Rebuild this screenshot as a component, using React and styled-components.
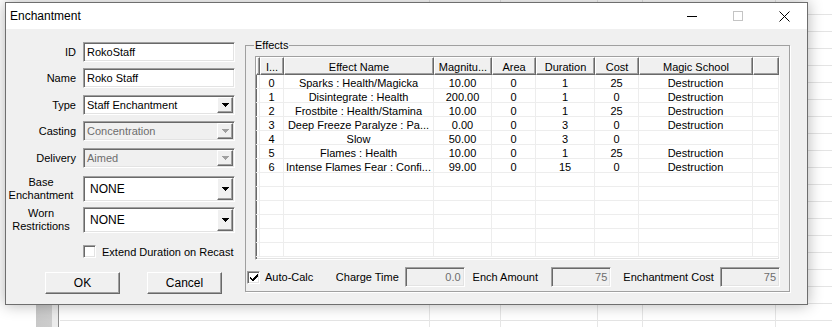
import React from "react";
import styled, { createGlobalStyle, css } from "styled-components";

const GlobalStyle = createGlobalStyle`
  html, body {
    margin: 0;
    padding: 0;
    background: #fff;
  }
  body {
    font-family: "Liberation Sans", Arial, sans-serif;
    font-size: 11px;
    color: #000;
  }
  * {
    box-sizing: border-box;
  }
`;

const sunken = css`
  border: 1px solid;
  border-color: #a0a0a0 #fff #fff #a0a0a0;
  box-shadow: inset 1px 1px 0 #696969, inset -1px -1px 0 #e3e3e3;
`;

const raised = css`
  border: 1px solid;
  border-color: #fff #696969 #696969 #fff;
  box-shadow: inset -1px -1px 0 #a0a0a0, inset 1px 1px 0 #f0f0f0;
`;

const Desktop = styled.div`
  width: 832px;
  height: 327px;
  overflow: hidden;
  padding: 2px 0 0 5px;
  background-color: #fff;
  background-image:
    linear-gradient(to right, transparent 429px, #e6e6e6 429px, #e6e6e6 430px, transparent 430px,
      transparent 500px, #e6e6e6 500px, #e6e6e6 501px, transparent 501px,
      transparent 597px, #e6e6e6 597px, #e6e6e6 598px, transparent 598px,
      transparent 642px, #e6e6e6 642px, #e6e6e6 643px, transparent 643px,
      transparent 775px, #e6e6e6 775px, #e6e6e6 776px, transparent 776px),
    repeating-linear-gradient(to bottom, transparent 0, transparent 14px, #e4e4e4 14px, #e4e4e4 15px, transparent 15px, transparent 17px),
    linear-gradient(to right, transparent 36px, #c8c8c8 36px, #cdcdcd 52px, #ececec 52px, #ececec 58px, #8c8c8c 58px, #8c8c8c 59px, transparent 59px);
  background-repeat: no-repeat;
  background-position: 0 0, 60px 0, 0 305px;
  background-size: 100% 100%, calc(100% - 60px) 100%, 100% 30px;
`;

const Window = styled.div`
  width: 803px;
  height: 303px;
  border: 1px solid #6e6e6e;
  background: #f0f0f0;
  box-shadow: 0 0 14px rgba(0, 0, 0, 0.3);
  display: flex;
  flex-direction: column;
`;

const TitleBar = styled.div`
  height: 26px;
  background: #fff;
  display: flex;
  align-items: center;
`;

const Title = styled.div`
  flex: 1;
  padding-left: 4px;
  font-size: 12px;
  color: #000;
`;

const CaptionButton = styled.div`
  width: 46px;
  height: 26px;
  display: flex;
  align-items: center;
  justify-content: center;
`;

const MinGlyph = styled.div`
  width: 10px;
  height: 1px;
  background: #000;
`;

const MaxGlyph = styled.div`
  width: 10px;
  height: 10px;
  border: 1px solid #c4c4c4;
`;

const Body = styled.div`
  flex: 1;
  display: flex;
`;

const Form = styled.div`
  width: 229px;
  padding-top: 13px;
  display: flex;
  flex-direction: column;
`;

const FieldRow = styled.div`
  display: grid;
  grid-template-columns: 70px 152px;
  column-gap: 7px;
  align-items: center;
  height: ${(p) => p.$h || 20}px;
  margin-top: ${(p) => p.$mt || 0}px;
`;

const Label = styled.div`
  text-align: ${(p) => (p.$center ? "center" : "right")};
  line-height: 13px;
  white-space: pre-line;
`;

const TextBox = styled.div`
  ${sunken};
  height: 100%;
  background: #fff;
  padding-left: 3px;
  display: flex;
  align-items: center;
  white-space: nowrap;
`;

const Combo = styled.div`
  ${sunken};
  height: 100%;
  background: ${(p) => (p.$disabled ? "#f0f0f0" : "#fff")};
  color: ${(p) => (p.$disabled ? "#6d6d6d" : "#000")};
  display: flex;
  align-items: center;
`;

const ComboText = styled.div`
  flex: 1;
  padding-left: ${(p) => p.$pad || 3}px;
  font-size: ${(p) => p.$size || 11}px;
  white-space: nowrap;
`;

const DropButton = styled.div`
  ${raised};
  width: 16px;
  align-self: stretch;
  margin: 1px;
  background: #f0f0f0;
  display: flex;
  align-items: center;
  justify-content: center;
`;

const CheckRow = styled.div`
  display: flex;
  align-items: center;
  margin: 17px 0 0 77px;
  height: 13px;
`;

const CheckBox = styled.div`
  ${sunken};
  width: ${(p) => p.$size || 13}px;
  height: ${(p) => p.$size || 13}px;
  background: #fff;
  flex-shrink: 0;
  display: flex;
  align-items: center;
  justify-content: center;
`;

const CheckText = styled.span`
  margin-left: ${(p) => p.$gap || 6}px;
  white-space: nowrap;
`;

const ButtonRow = styled.div`
  display: flex;
  gap: 27px;
  margin: 14px 0 0 39px;
`;

const Button = styled.div`
  ${raised};
  width: 75px;
  height: 22px;
  background: #f0f0f0;
  display: flex;
  align-items: center;
  justify-content: center;
  font-size: 12px;
`;

const GroupBox = styled.fieldset`
  margin: 10px 0 0 10px;
  padding: 0 9px 4px 9px;
  width: 545px;
  height: 253px;
  border: 1px solid #a0a0a0;
  box-shadow: 1px 1px 0 #fff;
  min-width: 0;
`;

const Legend = styled.legend`
  margin-left: -1px;
  padding: 0 1px;
  line-height: 13px;
  font-size: 11px;
`;

const ListView = styled.div`
  ${sunken};
  margin-top: 4px;
  height: 204px;
  background: #fff;
  display: grid;
  grid-template-columns: 4px 24px 150px 58px 44px 59px 44px 114px 1fr;
  grid-template-rows: 18px;
  grid-auto-rows: 14px;
  overflow: hidden;
`;

const HeadCell = styled.div`
  ${raised};
  background: #f0f0f0;
  text-align: center;
  padding-top: 3px;
  line-height: 13px;
  white-space: nowrap;
  overflow: hidden;
`;

const Cell = styled.div`
  border-right: 1px solid #ededed;
  border-bottom: 1px solid #ededed;
  text-align: center;
  padding-top: 2px;
  line-height: 12px;
  white-space: nowrap;
`;

const StatsRow = styled.div`
  display: flex;
  align-items: center;
  height: 20px;
  margin: 7px 0 0 -8px;
`;

const AutoCalc = styled.div`
  width: 89px;
  display: flex;
  align-items: center;
`;

const StatLabel = styled.div`
  width: ${(p) => p.$w}px;
  padding-left: ${(p) => p.$pl || 0}px;
  white-space: nowrap;
`;

const StatField = styled.div`
  ${sunken};
  width: 60px;
  height: 20px;
  background: #f0f0f0;
  color: #6d6d6d;
  text-align: right;
  padding-right: 3px;
  line-height: 18px;
`;

const headers = ["", "I...", "Effect Name", "Magnitu...", "Area", "Duration", "Cost", "Magic School", ""];

const effects = [
  ["0", "Sparks : Health/Magicka", "10.00", "0", "1", "25", "Destruction"],
  ["1", "Disintegrate : Health", "200.00", "0", "1", "0", "Destruction"],
  ["2", "Frostbite : Health/Stamina", "10.00", "0", "1", "25", "Destruction"],
  ["3", "Deep Freeze Paralyze : Pa...", "0.00", "0", "3", "0", "Destruction"],
  ["4", "Slow", "50.00", "0", "3", "0", ""],
  ["5", "Flames : Health", "10.00", "0", "1", "25", "Destruction"],
  ["6", "Intense Flames Fear : Confi...", "99.00", "0", "15", "0", "Destruction"],
];

const Arrow = ({ disabled }) => (
  <svg width="7" height="4" viewBox="0 0 7 4" shapeRendering="crispEdges">
    <polygon points="0,0 7,0 3.5,4" fill={disabled ? "#a0a0a0" : "#000"} />
  </svg>
);

const Select = ({ value, disabled, pad, size }) => (
  <Combo $disabled={disabled}>
    <ComboText $pad={pad} $size={size}>{value}</ComboText>
    <DropButton>
      <Arrow disabled={disabled} />
    </DropButton>
  </Combo>
);

const CloseGlyph = () => (
  <svg width="11" height="11" viewBox="0 0 11 11">
    <path d="M0.5 0.5 L10.5 10.5 M10.5 0.5 L0.5 10.5" stroke="#000" strokeWidth="1" />
  </svg>
);

const Tick = () => (
  <svg width="8" height="7" viewBox="0 0 8 7" shapeRendering="crispEdges">
    <path d="M0 3 L0 5 L2 7 L3 7 L8 2 L8 0 L7 0 L2.5 4.5 L2 4.5 Z" fill="#000" />
  </svg>
);

const App = () => {
  const blankRows = Array.from({ length: 6 });
  return (
    <Desktop>
      <GlobalStyle />
      <Window>
        <TitleBar>
          <Title>Enchantment</Title>
          <CaptionButton>
            <MinGlyph />
          </CaptionButton>
          <CaptionButton>
            <MaxGlyph />
          </CaptionButton>
          <CaptionButton>
            <CloseGlyph />
          </CaptionButton>
        </TitleBar>
        <Body>
          <Form>
            <FieldRow>
              <Label>ID</Label>
              <TextBox>RokoStaff</TextBox>
            </FieldRow>
            <FieldRow $mt={6}>
              <Label>Name</Label>
              <TextBox>Roko Staff</TextBox>
            </FieldRow>
            <FieldRow $mt={7}>
              <Label>Type</Label>
              <Select value="Staff Enchantment" />
            </FieldRow>
            <FieldRow $mt={6}>
              <Label>Casting</Label>
              <Select value="Concentration" disabled />
            </FieldRow>
            <FieldRow $mt={7}>
              <Label>Delivery</Label>
              <Select value="Aimed" disabled />
            </FieldRow>
            <FieldRow $mt={8} $h={22}>
              <Label $center>{"Base\nEnchantment"}</Label>
              <Select value="NONE" pad={6} size={12} />
            </FieldRow>
            <FieldRow $mt={9} $h={21}>
              <Label $center>{"Worn\nRestrictions"}</Label>
              <Select value="NONE" pad={6} size={12} />
            </FieldRow>
            <CheckRow>
              <CheckBox />
              <CheckText>Extend Duration on Recast</CheckText>
            </CheckRow>
            <ButtonRow>
              <Button>OK</Button>
              <Button>Cancel</Button>
            </ButtonRow>
          </Form>

          <GroupBox>
            <Legend>Effects</Legend>
            <ListView>
              {headers.map((h, i) => (
                <HeadCell key={`h${i}`}>{h}</HeadCell>
              ))}
              {effects.map((row, r) => (
                <React.Fragment key={`r${r}`}>
                  <Cell />
                  {row.map((v, c) => (
                    <Cell key={c}>{v}</Cell>
                  ))}
                  <Cell />
                </React.Fragment>
              ))}
              {blankRows.map((_, r) =>
                headers.map((_, c) => <Cell key={`b${r}-${c}`} />)
              )}
            </ListView>
            <StatsRow>
              <AutoCalc>
                <CheckBox $size={13}>
                  <Tick />
                </CheckBox>
                <CheckText $gap={5}>Auto-Calc</CheckText>
              </AutoCalc>
              <StatLabel $w={69}>Charge Time</StatLabel>
              <StatField>0.0</StatField>
              <StatLabel $w={87} $pl={8}>Ench Amount</StatLabel>
              <StatField>75</StatField>
              <StatLabel $w={109} $pl={12}>Enchantment Cost</StatLabel>
              <StatField>75</StatField>
            </StatsRow>
          </GroupBox>
        </Body>
      </Window>
    </Desktop>
  );
};

export default App;
